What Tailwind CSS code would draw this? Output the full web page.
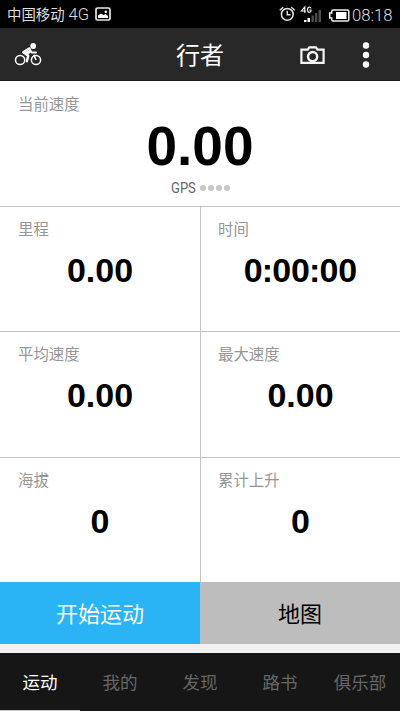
<!DOCTYPE html>
<html lang="zh-CN">
<head>
<meta charset="utf-8">
<meta name="viewport" content="width=device-width, initial-scale=1">
<title>行者</title>
<script src="https://cdn.jsdelivr.net/npm/@tailwindcss/browser@4"></script>
</head>
<body class="bg-[#f1f1f1]">
<div class="flex h-[711px] w-[400px] flex-col overflow-hidden font-['Noto_Sans_CJK_SC',sans-serif]">
  <!-- status bar -->
  <div class="flex h-7 shrink-0 items-center bg-black pl-[7px] text-[#dedede]">
    <span class="whitespace-nowrap text-[14.4px] leading-7">中国移动</span>
    <span class="ml-[4px] w-[22px] whitespace-nowrap pt-px font-[Roboto,sans-serif] text-[16.5px] font-light leading-[28px]">4G</span>
    <svg class="ml-[4px]" width="16" height="14" viewBox="0 0 16 14"><rect x="1" y="1" width="14" height="12" rx="1.5" fill="none" stroke="#e8e8e8" stroke-width="1.7"/><path d="M3 11V8.500l3-2 2.500 1.500L10.500 7l2.500 2v2z" fill="#fff"/><circle cx="10.800" cy="4.800" r="1.300" fill="#fff"/></svg>
    <svg class="ml-auto" width="17" height="16" viewBox="0 0 17 16" fill="none" stroke="#e4e4e4" stroke-width="1.500"><circle cx="8.300" cy="8.300" r="5.900"/><path d="M8.300 4.800v4h3.200M.8 4.300 4.300 1.300M12.300 1.300l3.500 3"/></svg>
    <svg class="ml-[4px]" width="23" height="18" viewBox="0 0 23 18"><path d="M4.800 8V2L1.200 6h4.900M11 3.300Q10.700 2.200 9.400 2.200 7.500 2.200 7.500 4.700T9.400 7.300Q11 7.300 11 5.800V5H9.400" fill="none" stroke="#eee" stroke-width="1.200"/><path d="M4 15h2.500v2H4zM7.500 13h2.500v4H7.500z" fill="#fff"/><path d="M11.500 10.500h2.300V17h-2.300zM15 8h2.300v9H15zM18.500 5h2.500v12h-2.500z" fill="#4c4c4c"/></svg>
    <svg class="ml-[5px] mt-[2px]" width="22" height="13" viewBox="0 0 22 13"><path d="M5 1h14.500q1.300 0 1.300 1.300v8.400q0 1.300-1.300 1.300H5q-1.300 0-1.300-1.500V9H1.700V4h2V2.500Q3.700 1 5 1z" fill="none" stroke="#eee" stroke-width="1.500"/><path d="M8 3h10.500v7H8z" fill="#fff"/></svg>
    <span class="ml-[2px] mr-[7px] w-[41px] whitespace-nowrap pt-[3px] font-[Roboto,sans-serif] text-[16.7px] font-light leading-[25px]">08:18</span>
  </div>
  <!-- app bar -->
  <div class="grid h-[53px] shrink-0 grid-cols-[1fr_auto_1fr] items-center border-b border-[#1c1c1c] bg-[#282828] text-white">
    <svg class="ml-[14px] mt-[2px]" width="29" height="26" viewBox="0 0 29 26" fill="none" stroke="#fff"><circle cx="6.100" cy="18" r="4.600" stroke-width="1.500"/><circle cx="22" cy="18" r="4.600" stroke-width="1.500"/><circle cx="19.200" cy="4" r="2.900" fill="#fff" stroke="none"/><path d="M15.300 6.500 9.300 10.300l4.900 3.500-1.300 5.500" stroke-width="2.500" stroke-linejoin="round" stroke-linecap="round"/><path d="M15.300 6.900l2.400 3.700h4.300" stroke-width="2" stroke-linecap="round" stroke-linejoin="round"/><path d="M16.600 7.500l-6.800 3.400 4 2 3.400-3z" fill="#fff" stroke="none"/><path d="M19.800 12.800l2.200 5.200" stroke-width="1.600"/></svg>
    <h1 class="text-[24px] leading-[52px]">行者</h1>
    <div class="flex items-center justify-end">
      <svg class="mt-[2px]" width="25" height="19" viewBox="0 0 25 19" fill="none" stroke="#f5f5f5"><path d="M1.400 3.600h6.400L9.200 1.300h6.800l1.400 2.300h6.200v13.300H1.400z" stroke-width="2.200"/><circle cx="12.600" cy="10.600" r="4.600" stroke-width="2.400"/></svg>
      <svg class="ml-[37px] mr-[30px] mt-px" width="8" height="28" viewBox="0 0 8 28" fill="#fff"><circle cx="4" cy="4.500" r="3.200"/><circle cx="4" cy="14" r="3.200"/><circle cx="4" cy="23.500" r="3.200"/></svg>
    </div>
  </div>
  <!-- current speed -->
  <section class="flex h-[125px] shrink-0 flex-col bg-white">
    <h2 class="pl-[18px] pt-[12px] text-[15.4px] leading-5 text-[#969696]">当前速度</h2>
    <p class="text-center font-['Liberation_Sans',sans-serif] text-[55px] font-bold leading-[66px]">0.00</p>
    <div class="flex items-center justify-center leading-[18px]">
      <span class="w-[25px] origin-left scale-x-[0.87] font-[Roboto,sans-serif] text-[15px] text-[#666]">GPS</span>
      <span class="ml-1 flex gap-[2px]"><i class="size-[6px] rounded-full bg-[#c8c8c8]"></i><i class="size-[6px] rounded-full bg-[#c8c8c8]"></i><i class="size-[6px] rounded-full bg-[#c8c8c8]"></i><i class="size-[6px] rounded-full bg-[#c8c8c8]"></i></span>
    </div>
  </section>
  <!-- metrics -->
  <section class="grid h-[376px] shrink-0 grid-cols-2 grid-rows-[125px_126px_125px] bg-white [&>div]:border-t [&>div]:border-[#c4c4c4] [&>div:nth-child(even)]:border-l [&_h2]:pl-[18px] [&>div:nth-child(even)>h2]:pl-[17px] [&_h2]:pt-[11px] [&_h2]:text-[15.4px] [&_h2]:leading-5 [&_h2]:text-[#969696] [&_p]:pt-[12px] [&_p]:text-center [&_p]:font-['Liberation_Sans',sans-serif] [&_p]:text-[34px] [&_p]:font-bold [&_p]:leading-[40px]">
    <div><h2>里程</h2><p>0.00</p></div>
    <div><h2>时间</h2><p>0<span class="-mx-[0.95px]">:</span>00<span class="-mx-[0.95px]">:</span>00</p></div>
    <div><h2>平均速度</h2><p>0.00</p></div>
    <div><h2>最大速度</h2><p>0.00</p></div>
    <div><h2>海拔</h2><p>0</p></div>
    <div><h2>累计上升</h2><p>0</p></div>
  </section>
  <div class="grid h-[62px] shrink-0 grid-cols-2 text-[22px] leading-[60px]">
    <button class="bg-[#2ab3f5] pb-[2px] text-white">开始运动</button>
    <button class="bg-[#bdbdbd] pb-[2px] text-black">地图</button>
  </div>
  <!-- tabs -->
  <nav class="mt-[9px] grid h-[58px] shrink-0 grid-cols-5 bg-[#161616] text-center text-[17.5px] leading-[57px] text-[#666]">
    <a class="border-b-2 border-[#c8c8c8] text-white">运动</a>
    <a>我的</a>
    <a>发现</a>
    <a>路书</a>
    <a>俱乐部</a>
  </nav>
</div>
</body>
</html>
